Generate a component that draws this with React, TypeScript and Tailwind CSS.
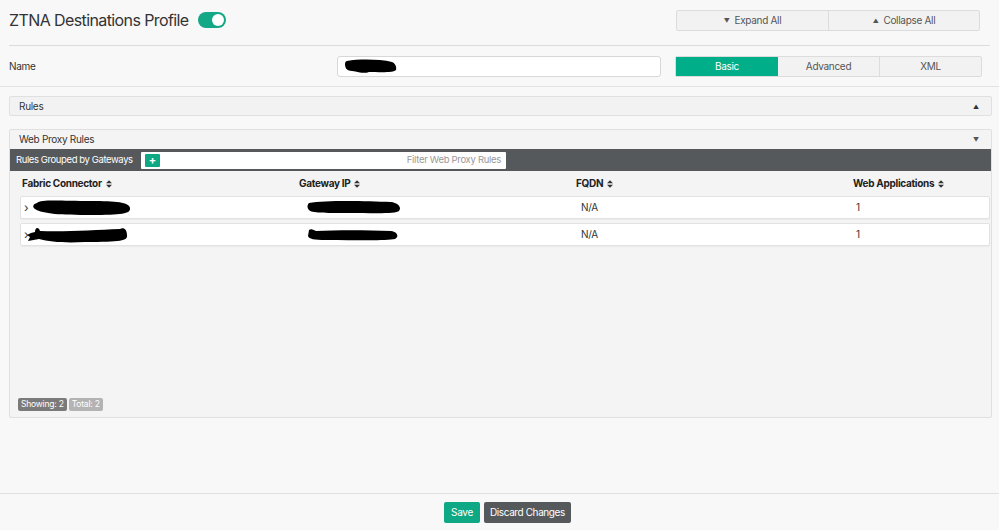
import React from "react";

const Sort = () => (
  <svg width="6" height="8" viewBox="0 0 7 9" className="inline-block ml-[4px] -mt-px">
    <path d="M3.5 0 L7 3.6 H0 Z M3.5 9 L7 5.4 H0 Z" fill="#333" />
  </svg>
);

const Blob = ({ w, h, d }: { w: number; h: number; d: string }) => (
  <svg width={w} height={h} viewBox={`0 0 ${w} ${h}`} className="block">
    <path d={d} fill="#000" />
  </svg>
);

const Row = ({ first }: { first: boolean }) => (
  <div className="flex items-center h-[23px] bg-white border border-[#e2e2e2] rounded-[2px] ml-[10px] mr-[1px] shadow-[0_1px_1px_rgba(0,0,0,0.04)]">
    <div className="w-[277px] flex items-center pl-[3px]">
      <span className="text-[12px] text-[#333] mr-[2px]">›</span>
      {first ? (
        <Blob w={100} h={17} d="M6 4 C10 0 30 2 60 2 C85 2 98 3 99 9 C100 15 90 16 60 16 C30 16 12 15 4 10 C1 8 2 5 6 4 Z" />
      ) : (
        <div className="-ml-[6px]">
          <Blob w={104} h={18} d="M6 7 L10 6 C10 1 14 1 15 5 C40 6 70 4 95 3 C99 1 102 4 102 9 C103 15 96 16 60 16 C40 17 25 16 14 13 L3 15 L5 11 L2 9 Z" />
        </div>
      )}
    </div>
    <div className="w-[277px] pl-[8px]">
      {first ? (
        <Blob w={95} h={15} d="M3 3 C20 0 60 1 85 2 C92 3 96 7 93 11 C90 14 70 13 40 13 C20 13 5 13 3 10 C1 8 1 5 3 3 Z" />
      ) : (
        <Blob w={92} h={14} d="M3 2 C5 0 8 2 10 3 C30 2 60 2 85 3 C92 4 93 9 89 11 C80 13 50 12 20 12 C8 12 3 11 2 8 Z" />
      )}
    </div>
    <div className="w-[277px] pl-[6px] text-[10px] tracking-[-0.3px] text-[#333]">N/A</div>
    <div className="flex-1 pl-[4px] text-[10px] text-[#333]">1</div>
  </div>
);

export default function App() {
  return (
    <div
      className="w-[999px] h-[530px] bg-[#f8f8f8] flex flex-col text-[#333] overflow-hidden"
      style={{ fontFamily: "Inter, 'Noto Sans', sans-serif" }}
    >
      <div className="flex-1 flex flex-col">
        {/* Header */}
        <div className="flex items-center justify-between h-[45px] pl-[9px] pr-[19px]">
          <div className="flex items-center gap-[9px] -mt-[6px]">
            <h1 className="text-[16px] tracking-[-0.6px] text-[#333] font-normal">ZTNA Destinations Profile</h1>
            <div className="w-[28px] h-[16px] rounded-full bg-[#15a886] relative">
              <div className="absolute right-[2px] top-[2px] w-[12px] h-[12px] rounded-full bg-white" />
            </div>
          </div>
          <div className="flex h-[21px] border border-[#dcdcdc] rounded-[2px] bg-[#f2f2f2] -mt-[4px]">
            <button className="w-[152px] flex items-center justify-center gap-[5px] text-[10px] tracking-[-0.3px] text-[#555] border-r border-[#dcdcdc]">
              <span className="text-[6px]">▼</span> Expand All
            </button>
            <button className="w-[150px] flex items-center justify-center gap-[5px] text-[10px] tracking-[-0.3px] text-[#555]">
              <span className="text-[6px]">▲</span> Collapse All
            </button>
          </div>
        </div>
        <div className="ml-[9px] mr-[9px] border-t border-[#dcdcdc]" />

        {/* Name row */}
        <div className="flex items-center h-[40px] pl-[9px] pr-[17px]">
          <div className="w-[329px] text-[10px] tracking-[-0.3px] text-[#333]">Name</div>
          <div className="w-[325px] h-[21px] bg-white border border-[#d8d8d8] rounded-[3px] flex items-center pl-[6px]">
            <Blob w={54} h={15} d="M3 2 C15 0 35 0 48 3 C51 4 53 8 52 11 C50 14 35 13 25 13 C20 15 15 13 8 12 C2 12 1 8 1 5 C1 3 2 2 3 2 Z" />
          </div>
          <div className="ml-[14px] flex h-[21px] border border-[#dcdcdc] rounded-[2px] bg-[#f2f2f2]">
            <div className="w-[102px] bg-[#00ae8a] text-white text-[10px] tracking-[-0.3px] flex items-center justify-center">Basic</div>
            <div className="w-[102px] text-[10px] tracking-[-0.3px] text-[#555] flex items-center justify-center border-r border-[#dcdcdc]">Advanced</div>
            <div className="w-[101px] text-[10px] tracking-[-0.3px] text-[#555] flex items-center justify-center">XML</div>
          </div>
        </div>
        <div className="border-t border-[#e2e2e2]" />

        {/* Rules panel */}
        <div className="ml-[9px] mr-[7px] mt-[9px] h-[20px] bg-[#f2f2f2] border border-[#e0e0e0] rounded-[2px] flex items-center justify-between pl-[9px] pr-[12px]">
          <span className="text-[10px] tracking-[-0.3px] text-[#333]">Rules</span>
          <span className="text-[6px] text-[#333]">▲</span>
        </div>

        {/* Web proxy rules panel */}
        <div className="ml-[9px] mr-[7px] mt-[13px] h-[289px] bg-[#f4f4f4] border border-[#e0e0e0] rounded-[2px] flex flex-col">
          <div className="h-[19px] flex items-center justify-between pl-[9px] pr-[12px]">
            <span className="text-[10px] tracking-[-0.3px] text-[#333]">Web Proxy Rules</span>
            <span className="text-[6px] text-[#555]">▼</span>
          </div>
          <div className="h-[22px] bg-[#55595c] flex items-center pl-[6px]">
            <span className="text-[9.5px] tracking-[-0.4px] text-white w-[125px] whitespace-nowrap">Rules Grouped by Gateways</span>
            <div className="w-[365px] h-[17px] bg-white rounded-[1px] flex items-center pl-[4px] pr-[5px]">
              <div className="w-[15px] h-[13px] bg-[#0ea885] rounded-[1px] flex items-center justify-center text-white text-[11px] font-bold leading-none">+</div>
              <span className="ml-auto text-[9.5px] tracking-[-0.3px] text-[#999]">Filter Web Proxy Rules</span>
            </div>
          </div>
          <div className="h-[25px] flex items-center pl-[12px] text-[10px] tracking-[-0.3px] font-bold text-[#222]">
            <div className="w-[277px]">Fabric Connector<Sort /></div>
            <div className="w-[277px]">Gateway IP<Sort /></div>
            <div className="w-[277px]">FQDN<Sort /></div>
            <div className="flex-1">Web Applications<Sort /></div>
          </div>
          <div className="flex flex-col gap-[4px]">
            <Row first />
            <Row first={false} />
          </div>
          <div className="mt-auto mb-[6px] pl-[8px] flex gap-[2px]">
            <span className="h-[13px] px-[3px] bg-[#7a7a7a] text-white text-[8.5px] tracking-[-0.2px] rounded-[2px] flex items-center">Showing: 2</span>
            <span className="h-[13px] px-[3px] bg-[#b3b3b3] text-white text-[8.5px] tracking-[-0.2px] rounded-[2px] flex items-center">Total: 2</span>
          </div>
        </div>
      </div>

      {/* Footer */}
      <div className="h-[37px] border-t border-[#e0e0e0] bg-[#f8f8f8] flex items-center justify-center gap-[4px] pl-[16px]">
        <button className="h-[21px] px-[7px] bg-[#0ea885] text-white text-[10px] tracking-[-0.3px] rounded-[2px]">Save</button>
        <button className="h-[21px] px-[6px] bg-[#55595c] text-white text-[10px] tracking-[-0.4px] rounded-[2px]">Discard Changes</button>
      </div>
    </div>
  );
}
